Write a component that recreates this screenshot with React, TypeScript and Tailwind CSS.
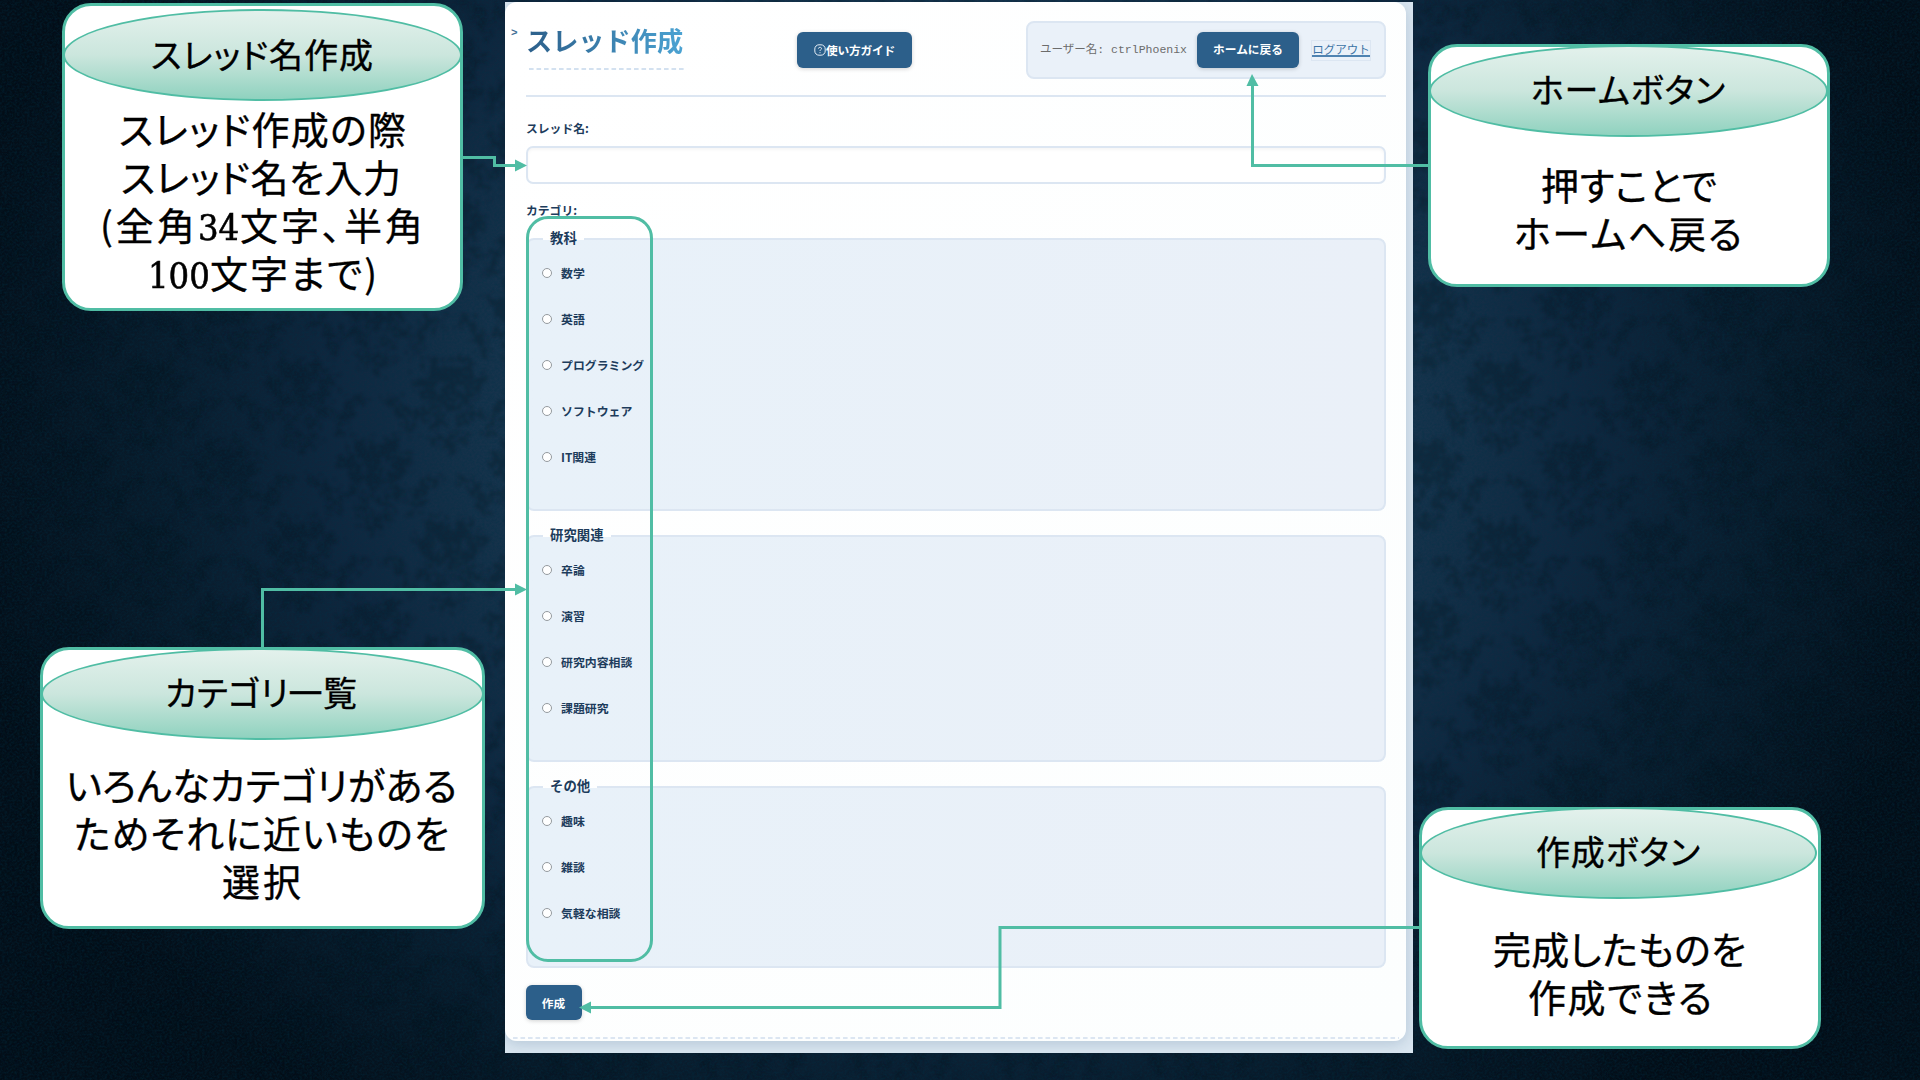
import React from "react";

const GREEN = "#50bda4";

type Line = { text: React.ReactNode; left: number; width: number; top: number };

const num = (s: string, width: string) => (
  <span className={`inline-block h-12 text-left align-bottom ${width}`}>
    <span className="inline-block origin-left scale-x-[0.9] font-['DejaVu_Serif',serif] text-[36px] tracking-normal [text-align-last:left] [-webkit-text-stroke:0.6px_black]">
      {s}
    </span>
  </span>
);

type CalloutProps = {
  box: string;
  oval: string;
  title: Line;
  lines: Line[];
};

function TextLine({ line, className }: { line: Line; className: string }) {
  return (
    <div
      className={`absolute whitespace-nowrap text-justify [text-align-last:justify] ${className}`}
      style={{ left: line.left, width: line.width, top: line.top }}
    >
      {line.text}
    </div>
  );
}

function Callout({ box, oval, title, lines }: CalloutProps) {
  return (
    <section className="text-black [-webkit-text-stroke:0.35px_black] [font-feature-settings:'palt'] font-['Noto_Sans_CJK_JP',sans-serif]">
      <div className={`absolute rounded-[29px] border-[3px] border-[#50bda4] bg-white ${box}`} />
      <div
        className={`absolute rounded-[50%] border-2 border-[#50bda4] bg-linear-to-b from-[#e3f1ec] via-[#cbe6dd] to-[#8fd2bf] ${oval}`}
      />
      <TextLine line={title} className="h-9 text-[34px] leading-9 tracking-[-2px]" />
      {lines.map((l, i) => (
        <TextLine key={i} line={l} className="h-12 text-[38px] leading-[48px] tracking-[-3px]" />
      ))}
    </section>
  );
}

function Motif({ x, y }: { x: number; y: number }) {
  return (
    <g transform={`translate(${x} ${y})`}>
      <ellipse cx="0" cy="-12" rx="7" ry="26" />
      <ellipse cx="0" cy="42" rx="7" ry="10" />
      {[1, -1].map((s) => (
        <g key={s} transform={`scale(${s} 1)`}>
          <ellipse cx="14" cy="-30" rx="8" ry="13" transform="rotate(20 14 -30)" />
          <ellipse cx="27" cy="-18" rx="11" ry="6" transform="rotate(-18 27 -18)" />
          <ellipse cx="18" cy="-4" rx="13" ry="6" transform="rotate(-30 18 -4)" />
          <ellipse cx="24" cy="13" rx="12" ry="5" transform="rotate(12 24 13)" />
          <ellipse cx="12" cy="23" rx="9" ry="5" transform="rotate(40 12 23)" />
          <ellipse cx="14" cy="40" rx="6" ry="4" />
          <ellipse cx="45" cy="18" rx="5" ry="20" transform="rotate(24 45 18)" />
          <ellipse cx="58" cy="2" rx="11" ry="4" transform="rotate(-14 58 2)" />
        </g>
      ))}
    </g>
  );
}

function Backdrop() {
  return (
    <svg className="absolute inset-0" width="1920" height="1080" aria-hidden="true">
      <defs>
        <radialGradient id="glow" gradientUnits="userSpaceOnUse" cx="0" cy="0" r="1" gradientTransform="translate(960 420) scale(1010 880)">
          <stop offset="0" stopColor="#1c3d5c" />
          <stop offset="0.42" stopColor="#18364f" />
          <stop offset="0.62" stopColor="#10273f" />
          <stop offset="0.8" stopColor="#091b2b" />
          <stop offset="1" stopColor="#040e18" />
        </radialGradient>
        <pattern id="damask" width="150" height="160" patternUnits="userSpaceOnUse">
          <g fill="#010b14">
            <Motif x={75} y={0} />
            <Motif x={75} y={160} />
            <Motif x={0} y={80} />
            <Motif x={150} y={80} />
          </g>
        </pattern>
        <filter id="worn" x="0" y="0" width="100%" height="100%">
          <feTurbulence type="fractalNoise" baseFrequency="0.16" numOctaves="3" seed="4" result="n" />
          <feDisplacementMap in="SourceGraphic" in2="n" scale="30" xChannelSelector="R" yChannelSelector="G" />
          <feGaussianBlur stdDeviation="1.4" />
        </filter>
        <filter id="grain" x="0" y="0" width="100%" height="100%">
          <feTurbulence type="fractalNoise" baseFrequency="0.4 0.5" numOctaves="2" seed="9" />
          <feColorMatrix values="0 0 0 0 0  0 0 0 0 0.03  0 0 0 0 0.06  1.6 0 0 0 -0.55" />
        </filter>
      </defs>
      <rect width="1920" height="1080" fill="url(#glow)" />
      <rect width="1920" height="1080" fill="url(#damask)" filter="url(#worn)" opacity="0.27" />
      <rect width="1920" height="1080" filter="url(#grain)" opacity="0.5" />
    </svg>
  );
}

function Connectors() {
  return (
    <svg className="absolute inset-0" width="1920" height="1080" aria-hidden="true">
      <g fill="none" stroke={GREEN} strokeWidth="3">
        <path d="M462 157.5H494.5V165.5H517" />
        <path d="M1430 165.5H1252.5V84" />
        <path d="M262.5 649V589.5H517" />
        <path d="M1420 927.5H1000V1007.5H589" />
      </g>
      <g fill={GREEN}>
        <path d="M515 159.5L527 165.5L515 171.5Z" />
        <path d="M1246.5 86L1252 74L1258.5 86Z" />
        <path d="M515 583.5L527 589.5L515 595.5Z" />
        <path d="M591 1001.5L579 1007.5L591 1013.5Z" />
      </g>
    </svg>
  );
}

function Category({ title, items, className }: { title: string; items: string[]; className: string }) {
  return (
    <fieldset
      className={`w-full rounded-[8px] border-2 border-[#dce6f2] bg-linear-to-r from-[#e8f1f9] to-[#eaf0f8] pl-3.5 ${className}`}
    >
      <legend className="ml-[1px] h-5 px-[7px] text-[13.4px] leading-[17px] font-bold">{title}</legend>
      <div className="flex flex-col pt-[1px]">
        {items.map((t) => (
          <label key={t} className="flex h-[46px] items-center gap-[9px] text-[11.9px] leading-none font-bold">
            <span className="size-[10px] rounded-full border border-[#949a9f] bg-white" />
            {t}
          </label>
        ))}
      </div>
    </fieldset>
  );
}

const btn = "flex items-center justify-center rounded-[6px] bg-[#2c5f8a] text-[11.7px] font-bold text-white shadow-[0_1px_4px_rgba(0,0,0,0.18)]";

function ThreadForm() {
  return (
    <div className="absolute top-[2px] left-[505px] h-[1051px] w-[908px] overflow-hidden bg-[#dae6f0] font-['Noto_Sans_CJK_JP',sans-serif] text-[#1d3c5c]">
      <div className="relative flex h-[1039px] w-[901px] flex-col rounded-[12px] bg-linear-to-br from-white to-[#fcfefe] pr-5 pl-[21px] shadow-[0_3px_14px_rgba(40,80,120,0.2)]">
        <span className="absolute top-[23px] left-[6px] font-['Liberation_Mono',monospace] text-[11px] leading-4 font-bold text-[#3f6d95]">&gt;</span>
        <header className="flex h-[95px] items-start justify-between border-b-2 border-[#dce6f2]">
          <div className="w-[158px] pt-[19px]">
            <h1 className="h-[47px] bg-linear-to-r from-[#2c5f8a] to-[#4ba3d3] bg-clip-text text-[26.2px] leading-[39px] font-bold whitespace-nowrap text-transparent">
              スレッド作成
            </h1>
            <svg className="ml-[3px] block" width="155" height="2" aria-hidden="true">
              <path d="M0 1H155" stroke="#d3e1f0" strokeWidth="2" strokeDasharray="4.6 2.9" />
            </svg>
          </div>
          <button className={`mt-[30px] mr-[1px] h-9 w-[115px] ${btn}`}>
            <svg width="12" height="12" viewBox="0 0 12 12" fill="none" stroke="#e6eef6" aria-hidden="true">
              <rect x="0.8" y="0.8" width="10.4" height="10.4" rx="4.2" />
              <path d="M4.4 4.6C4.5 2.8 7.6 2.9 7.5 4.6C7.4 5.7 6 5.7 6 7M6 8.2V9.2" />
            </svg>
            <span className="tracking-[-0.2px]">使い方ガイド</span>
          </button>
          <div className="mt-[19px] flex h-[58px] w-[360px] items-center rounded-[8px] border-2 border-[#dce6f2] bg-[#eaf1f9] pl-3">
            <span className="w-[157px] font-['Liberation_Mono','Noto_Sans_CJK_JP',monospace] text-[11.5px] whitespace-pre text-[#6c6c6c]">
              ユーザー名: ctrlPhoenix
            </span>
            <button className={`h-9 w-[102px] pb-[2px] ${btn}`}>ホームに戻る</button>
            <a className="ml-3 flex h-[21px] w-[60px] justify-center border border-[#dce6f2] text-[11.5px] leading-[17px] text-[#3d74a6]">
              <span className="h-[16px] border-b-2 border-[#4f83b1]">ログアウト</span>
            </a>
          </div>
        </header>
        <label className="mt-[22px] h-[18px] text-[11.8px] leading-[18px] font-bold">スレッド名:</label>
        <div className="mt-[9px] h-[38px] shrink-0 rounded-[7px] border-2 border-[#dce6f2] bg-white shadow-[inset_0_2px_3px_rgba(0,0,0,0.04)]" />
        <div className="mt-[17px] h-[18px] text-[11.8px] leading-[18px] font-bold">カテゴリ:</div>
        <Category className="mt-[10px] h-[282px]" title="教科" items={["数学", "英語", "プログラミング", "ソフトウェア", "IT関連"]} />
        <Category className="mt-[15px] h-[236px]" title="研究関連" items={["卒論", "演習", "研究内容相談", "課題研究"]} />
        <Category className="mt-[15px] h-[191px]" title="その他" items={["趣味", "雑談", "気軽な相談"]} />
        <button className={`mt-[17px] h-[35px] w-14 pr-[1px] ${btn}`}>作成</button>
        <svg className="absolute bottom-[2px] left-[8px]" width="886" height="2" aria-hidden="true">
          <path d="M0 1H886" stroke="#dce6f2" strokeWidth="2" strokeDasharray="4.6 2.9" />
        </svg>
      </div>
    </div>
  );
}

export default function App() {
  return (
    <main className="relative h-[1080px] w-[1920px] overflow-hidden bg-[#04111e]">
      <Backdrop />
      <ThreadForm />
      <div className="absolute top-[216px] left-[526px] h-[746px] w-[127px] rounded-[22px] border-[3px] border-[#50bda4]" />
      <Connectors />
      <Callout
        box="left-[62px] top-[3px] w-[401px] h-[308px]"
        oval="left-[63px] top-[9px] w-[399px] h-[92px]"
        title={{ text: "スレッド名作成", left: 151, width: 220, top: 36 }}
        lines={[
          { text: "スレッド作成の際", left: 119, width: 284, top: 104 },
          { text: "スレッド名を入力", left: 121, width: 277, top: 152 },
          { text: <>({"全角"}{num("34", "w-[36px]")}{"文字、半角"}</>, left: 100, width: 320, top: 200 },
          { text: <>{num("100", "w-[57px]")}{"文字まで)"}</>, left: 148, width: 226, top: 248 },
        ]}
      />
      <Callout
        box="left-[1428px] top-[44px] w-[402px] h-[243px]"
        oval="left-[1429px] top-[45px] w-[399px] h-[92px]"
        title={{ text: "ホームボタン", left: 1531, width: 192, top: 71 }}
        lines={[
          { text: "押すことで", left: 1541, width: 173, top: 160 },
          { text: "ホームへ戻る", left: 1514, width: 225, top: 208 },
        ]}
      />
      <Callout
        box="left-[40px] top-[647px] w-[445px] h-[282px]"
        oval="left-[41px] top-[648px] w-[443px] h-[92px]"
        title={{ text: "カテゴリ一覧", left: 165, width: 190, top: 674 }}
        lines={[
          { text: "いろんなカテゴリがある", left: 66, width: 388, top: 760 },
          { text: "ためそれに近いものを", left: 74, width: 372, top: 808 },
          { text: "選択", left: 222, width: 76, top: 856 },
        ]}
      />
      <Callout
        box="left-[1419px] top-[807px] w-[402px] h-[242px]"
        oval="left-[1420px] top-[807px] w-[397px] h-[92px]"
        title={{ text: "作成ボタン", left: 1536, width: 162, top: 833 }}
        lines={[
          { text: "完成したものを", left: 1493, width: 250, top: 924 },
          { text: "作成できる", left: 1528, width: 181, top: 972 },
        ]}
      />
    </main>
  );
}
